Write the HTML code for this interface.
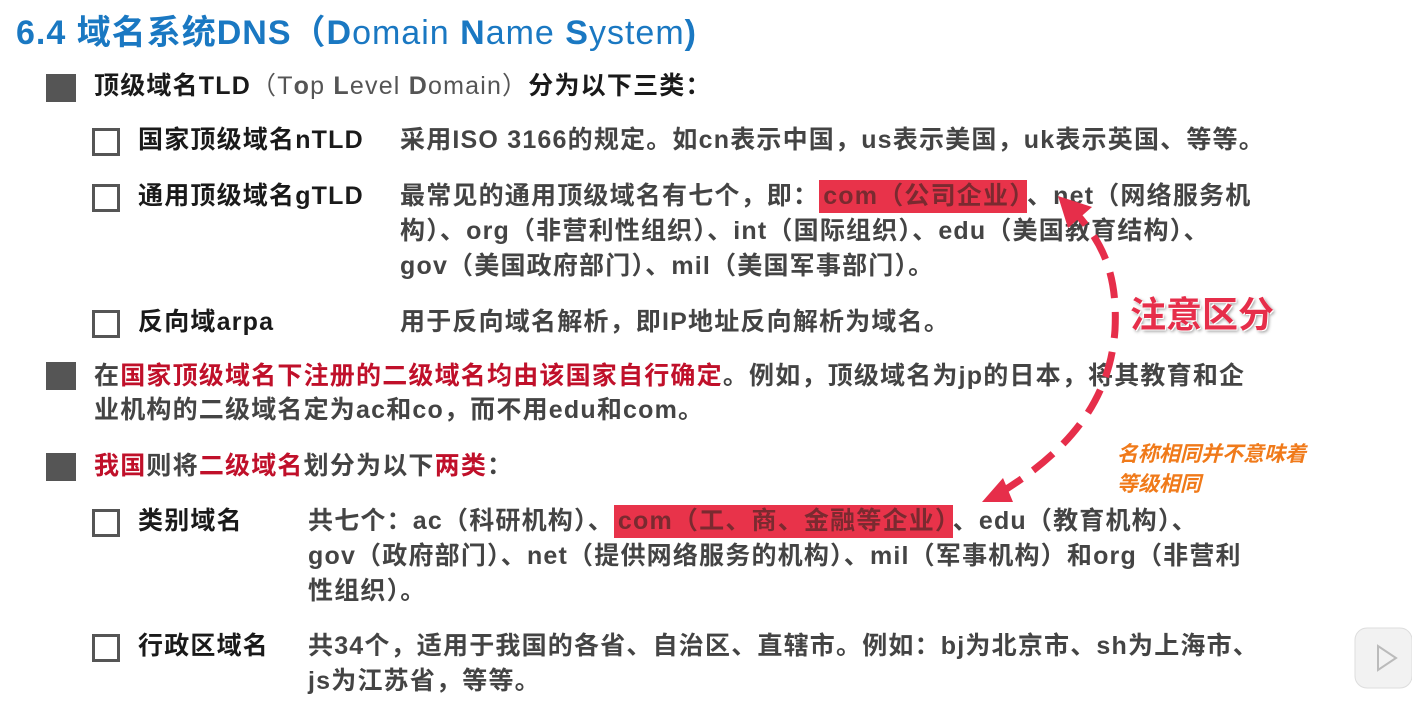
<!DOCTYPE html>
<html><head><meta charset="utf-8"><style>
body{margin:0;width:1412px;height:718px;background:#fff;overflow:hidden;position:relative;font-family:"Liberation Sans","Noto Sans CJK SC",sans-serif;}
.t{position:absolute;white-space:nowrap;font-size:25px;letter-spacing:1.2px;font-weight:bold;color:#444;line-height:35px;}
.k{color:#1a1a1a;}
.r{color:#c0102a;}
.sq{position:absolute;width:30px;height:28px;background:#555;}
.cb{position:absolute;width:22px;height:22px;border:3px solid #555;}
.hl{background:#e8334a;color:#7a2a30;padding:2px 4px 3px;}
.g{font-weight:normal;color:#555}
</style></head><body>
<div class="t" style="left:16px;top:12px;font-size:34px;letter-spacing:1px;color:#1a78c2;line-height:42px">6.4 域名系统DNS（<b>D</b><span style="font-weight:normal">omain </span><b>N</b><span style="font-weight:normal">ame </span><b>S</b><span style="font-weight:normal">ystem</span>)</div>

<div class="sq" style="left:46px;top:74px"></div>
<div class="t k" style="left:94px;top:69px">顶级域名TLD<span class="g">（T<span style="font-weight:bold;color:#555">o</span>p <b>L</b>evel <b>D</b>omain）</span>分为以下三类：</div>

<div class="cb" style="left:92px;top:128px"></div>
<div class="t k" style="left:138px;top:123px">国家顶级域名nTLD</div>
<div class="t" style="left:400px;top:123px">采用ISO 3166的规定。如cn表示中国，us表示美国，uk表示英国、等等。</div>

<div class="cb" style="left:92px;top:184px"></div>
<div class="t k" style="left:138px;top:179px">通用顶级域名gTLD</div>
<div class="t" style="left:400px;top:179px">最常见的通用顶级域名有七个，即：<span class="hl">com（公司企业）</span>、net（网络服务机</div>
<div class="t" style="left:400px;top:214px">构）、org（非营利性组织）、int（国际组织）、edu（美国教育结构）、</div>
<div class="t" style="left:400px;top:249px">gov（美国政府部门）、mil（美国军事部门）。</div>

<div class="cb" style="left:92px;top:310px"></div>
<div class="t k" style="left:138px;top:305px">反向域arpa</div>
<div class="t" style="left:400px;top:305px">用于反向域名解析，即IP地址反向解析为域名。</div>

<div class="sq" style="left:46px;top:362px"></div>
<div class="t" style="left:94px;top:359px">在<span class="r">国家顶级域名下注册的二级域名均由该国家自行确定</span>。例如，顶级域名为jp的日本，将其教育和企</div>
<div class="t" style="left:94px;top:393px">业机构的二级域名定为ac和co，而不用edu和com。</div>

<div class="sq" style="left:46px;top:453px"></div>
<div class="t" style="left:94px;top:449px"><span class="r">我国</span>则将<span class="r">二级域名</span>划分为以下<span class="r">两类</span>：</div>

<div class="cb" style="left:92px;top:509px"></div>
<div class="t k" style="left:138px;top:504px">类别域名</div>
<div class="t" style="left:308px;top:504px">共七个：ac（科研机构）、<span class="hl">com（工、商、金融等企业）</span>、edu（教育机构）、</div>
<div class="t" style="left:308px;top:539px">gov（政府部门）、net（提供网络服务的机构）、mil（军事机构）和org（非营利</div>
<div class="t" style="left:308px;top:574px">性组织）。</div>

<div class="cb" style="left:92px;top:634px"></div>
<div class="t k" style="left:138px;top:629px">行政区域名</div>
<div class="t" style="left:308px;top:629px">共34个，适用于我国的各省、自治区、直辖市。例如：bj为北京市、sh为上海市、</div>
<div class="t" style="left:308px;top:664px">js为江苏省，等等。</div>

<svg style="position:absolute;left:0;top:0" width="1412" height="718">
<path d="M1000 493 C1070 450,1110 400,1115 330 C1118 270,1100 240,1075 212" fill="none" stroke="#e62e4a" stroke-width="7" stroke-dasharray="26,14"/>
<polygon points="1058,196 1092,207 1068,228" fill="#e62e4a"/>
<polygon points="982,502 1003,478 1013,502" fill="#e62e4a"/>
<rect x="1355" y="628" width="57" height="60" rx="12" fill="#f2f2f2" stroke="#ddd"/>
<polygon points="1378,646 1378,670 1396,658" fill="none" stroke="#bbb" stroke-width="2"/>
</svg>
<div class="t" style="left:1130px;top:293px;font-size:36px;letter-spacing:0;line-height:44px;color:#e62e4a;text-shadow:1px 1px 0 #fff,-1px -1px 0 #fff,2px 2px 3px #999">注意区分</div>
<div class="t" style="left:1117px;top:440px;font-size:21px;letter-spacing:0;line-height:30px;color:#f07a1a;font-style:italic">名称相同并不意味着<br>等级相同</div>
</body></html>
